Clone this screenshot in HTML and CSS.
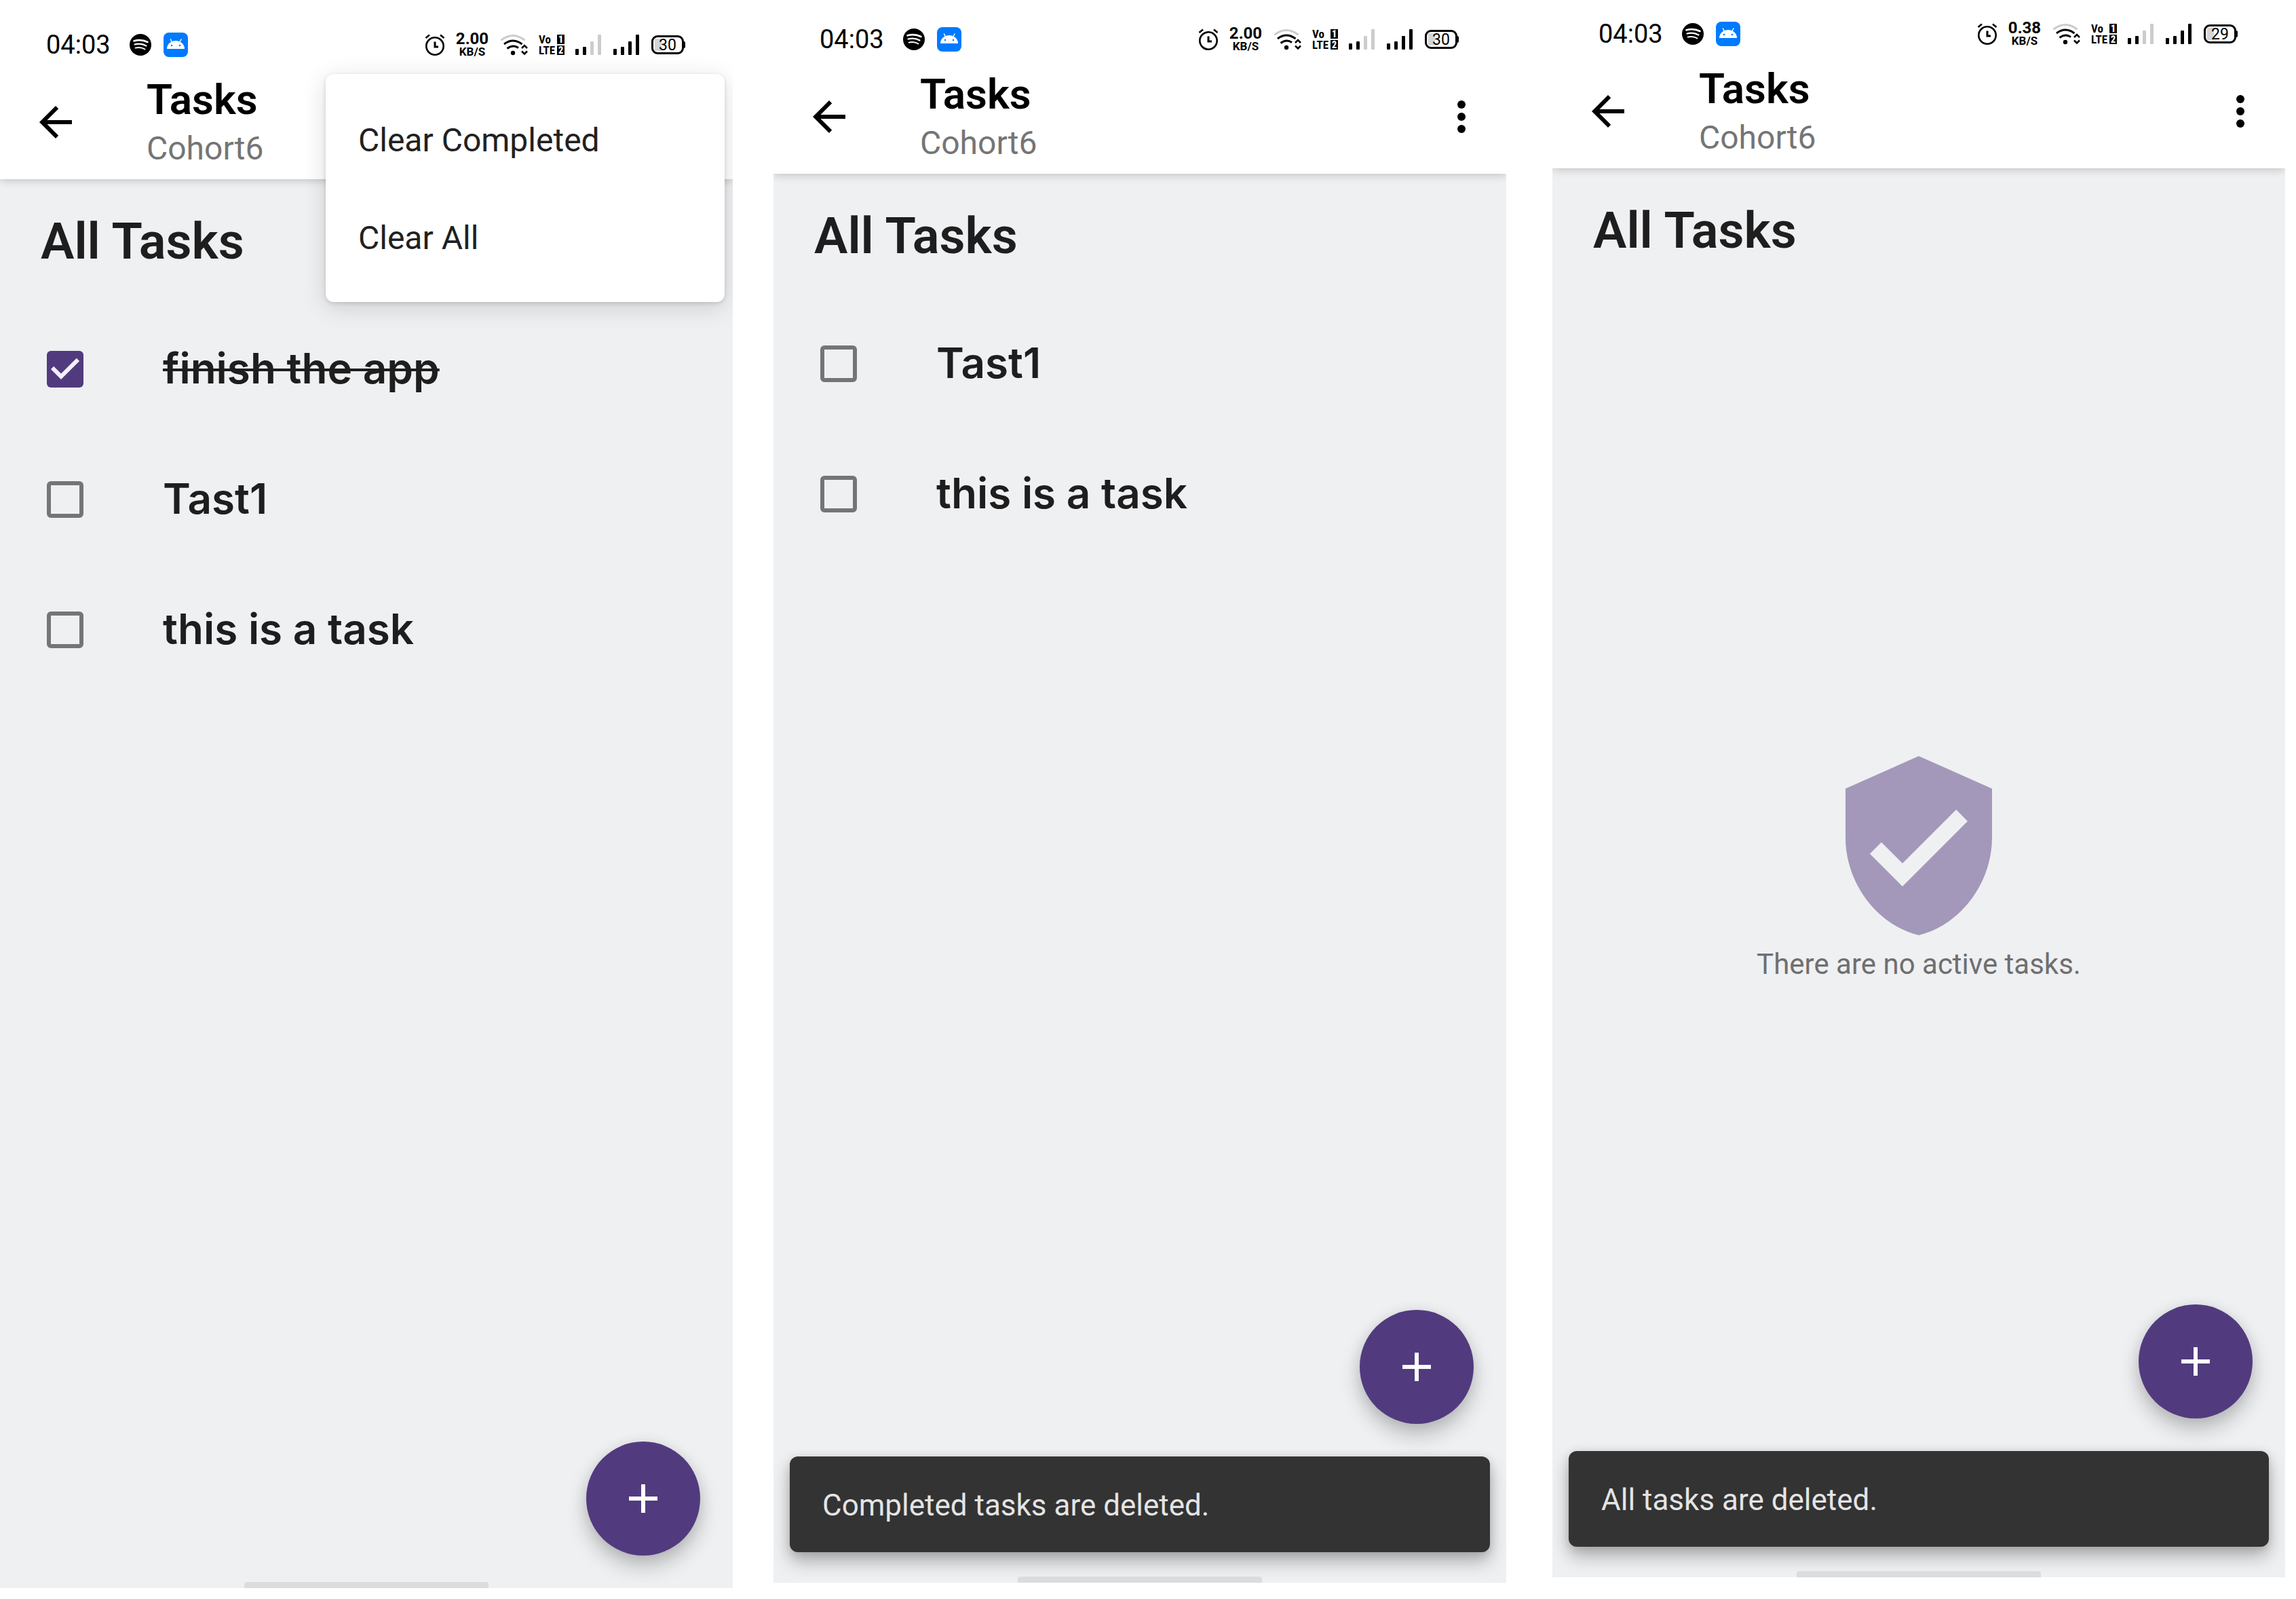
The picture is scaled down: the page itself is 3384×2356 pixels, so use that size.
FILE: index.html
```html
<!DOCTYPE html>
<html lang="en">
<head>
<meta charset="utf-8">
<title>Tasks</title>
<link rel="stylesheet" href="styles.css">
</head>
<body>
<svg class="sprite" aria-hidden="true">
  <symbol id="spotify" viewBox="0 0 32 32">
    <circle cx="16" cy="16" r="16"/>
    <g fill="none" stroke="#fff" stroke-linecap="round">
      <path d="M6.500 10.300C13 8.500 21 9.200 26.500 12" stroke-width="2.600"/>
      <path d="M7.500 15.500C13 14 19.500 14.500 24.500 17.500" stroke-width="2.200"/>
      <path d="M8.500 20.600C13 19.500 18.500 20 22.500 22.500" stroke-width="1.900"/>
    </g>
  </symbol>
  <symbol id="android" viewBox="0 0 36 36">
    <rect width="36" height="36" rx="8" fill="#007aff"/>
    <path d="M12.500 14.500L10.500 10M23.500 14.500L26 10" fill="none" stroke="#fff" stroke-width="1.500" stroke-linecap="round"/>
    <path d="M5 24a13 12 0 0 1 26 0z" fill="#fff"/>
    <circle cx="12" cy="19" r="1.300" fill="#007aff"/><circle cx="24" cy="19" r="1.300" fill="#007aff"/>
  </symbol>
  <symbol id="alarm" viewBox="0 0 30 32">
    <g fill="none" stroke="#000" stroke-width="2.600">
      <circle cx="15" cy="18" r="12.700"/>
      <path d="M15 11.500V19h5" stroke-width="3"/>
      <path d="M1.500 6L7 1.500M28.500 6L23 1.500"/>
    </g>
  </symbol>
  <symbol id="wifi" viewBox="0 0 40 32">
    <g fill="none" stroke="#000" stroke-width="3">
      <path d="M1.500 8.500Q18 -3.500 34.500 8.500" stroke="#ccc" stroke-linecap="round"/>
      <path d="M5 15Q18 5 31.500 15"/>
      <path d="M9.500 21.500Q18 15 26 20.500"/>
      <path d="M31 21l4-4 4 4M31 25.500l4 4 4-4" stroke-width="2.600"/>
    </g>
    <circle cx="18" cy="28" r="3.200"/>
  </symbol>
  <symbol id="signal-weak" viewBox="0 0 39 30">
    <rect y="21" width="5" height="9" rx="1"/><rect x="11" y="18" width="5" height="12" rx="1"/>
    <g fill="#ccc"><rect x="22" y="10" width="5" height="20" rx="1"/><rect x="33" width="5" height="30" rx="1"/></g>
  </symbol>
  <symbol id="signal-full" viewBox="0 0 39 30">
    <rect y="21" width="5" height="9" rx="1"/><rect x="11" y="18" width="5" height="12" rx="1"/>
    <rect x="22" y="10" width="5" height="20" rx="1"/><rect x="33" width="5" height="30" rx="1"/>
  </symbol>
  <symbol id="back" viewBox="0 0 24 24"><path d="M20 11H7.830l5.590-5.590L12 4l-8 8 8 8 1.410-1.410L7.830 13H20v-2z"/></symbol>
  <symbol id="more" viewBox="0 0 24 24"><circle cx="12" cy="6" r="2"/><circle cx="12" cy="12" r="2"/><circle cx="12" cy="18" r="2"/></symbol>
  <symbol id="add" viewBox="0 0 24 24"><path d="M19 13h-6v6h-2v-6H5v-2h6V5h2v6h6v2z"/></symbol>
  <symbol id="shield" viewBox="0 0 24 24"><path d="M12 1L3 5v6c0 5.550 3.840 10.740 9 12 5.160-1.260 9-6.450 9-12V5l-9-4zm-2 16l-4-4 1.410-1.410L10 14.170l6.590-6.590L18 9l-8 8z"/></symbol>
</svg>

<div class="board">
  <section class="phone">
    <div class="status">
      <span class="clock">04:03</span>
      <svg class="app-spotify"><use href="#spotify"/></svg>
      <svg class="app-android"><use href="#android"/></svg>
      <div class="indicators">
        <svg class="alarm"><use href="#alarm"/></svg>
        <div class="speed"><span class="rate">2.00</span><span class="unit">KB/S</span></div>
        <svg class="wifi"><use href="#wifi"/></svg>
        <div class="volte"><span>Vo</span><b>1</b><span>LTE</span><b>2</b></div>
        <svg class="signal"><use href="#signal-weak"/></svg>
        <svg class="signal"><use href="#signal-full"/></svg>
        <div class="battery">30</div>
      </div>
    </div>
    <header class="appbar">
      <button class="icon-button" aria-label="Back"><svg><use href="#back"/></svg></button>
      <div class="titles"><h1>Tasks</h1><p>Cohort6</p></div>
      <button class="icon-button" aria-label="More options"><svg><use href="#more"/></svg></button>
    </header>
    <main class="content">
      <h2>All Tasks</h2>
      <ul class="tasks">
        <li><label><input type="checkbox" checked><span>finish the app</span></label></li>
        <li><label><input type="checkbox"><span>Tast1</span></label></li>
        <li><label><input type="checkbox"><span>this is a task</span></label></li>
      </ul>
    </main>
    <button class="fab" aria-label="Add task"><svg><use href="#add"/></svg></button>
    <div class="home"></div>
    <div class="menu">
      <button>Clear Completed</button>
      <button>Clear All</button>
    </div>
  </section>

  <section class="phone phone-second">
    <div class="status">
      <span class="clock">04:03</span>
      <svg class="app-spotify"><use href="#spotify"/></svg>
      <svg class="app-android"><use href="#android"/></svg>
      <div class="indicators">
        <svg class="alarm"><use href="#alarm"/></svg>
        <div class="speed"><span class="rate">2.00</span><span class="unit">KB/S</span></div>
        <svg class="wifi"><use href="#wifi"/></svg>
        <div class="volte"><span>Vo</span><b>1</b><span>LTE</span><b>2</b></div>
        <svg class="signal"><use href="#signal-weak"/></svg>
        <svg class="signal"><use href="#signal-full"/></svg>
        <div class="battery">30</div>
      </div>
    </div>
    <header class="appbar">
      <button class="icon-button" aria-label="Back"><svg><use href="#back"/></svg></button>
      <div class="titles"><h1>Tasks</h1><p>Cohort6</p></div>
      <button class="icon-button" aria-label="More options"><svg><use href="#more"/></svg></button>
    </header>
    <main class="content">
      <h2>All Tasks</h2>
      <ul class="tasks">
        <li><label><input type="checkbox"><span>Tast1</span></label></li>
        <li><label><input type="checkbox"><span>this is a task</span></label></li>
      </ul>
    </main>
    <button class="fab" aria-label="Add task"><svg><use href="#add"/></svg></button>
    <div class="snackbar" role="status">Completed tasks are deleted.</div>
    <div class="home"></div>
  </section>

  <section class="phone phone-third">
    <div class="status">
      <span class="clock">04:03</span>
      <svg class="app-spotify"><use href="#spotify"/></svg>
      <svg class="app-android"><use href="#android"/></svg>
      <div class="indicators">
        <svg class="alarm"><use href="#alarm"/></svg>
        <div class="speed"><span class="rate">0.38</span><span class="unit">KB/S</span></div>
        <svg class="wifi"><use href="#wifi"/></svg>
        <div class="volte"><span>Vo</span><b>1</b><span>LTE</span><b>2</b></div>
        <svg class="signal"><use href="#signal-weak"/></svg>
        <svg class="signal"><use href="#signal-full"/></svg>
        <div class="battery">29</div>
      </div>
    </div>
    <header class="appbar">
      <button class="icon-button" aria-label="Back"><svg><use href="#back"/></svg></button>
      <div class="titles"><h1>Tasks</h1><p>Cohort6</p></div>
      <button class="icon-button" aria-label="More options"><svg><use href="#more"/></svg></button>
    </header>
    <main class="content">
      <h2>All Tasks</h2>
      <div class="empty">
        <svg><use href="#shield"/></svg>
        <p>There are no active tasks.</p>
      </div>
    </main>
    <button class="fab" aria-label="Add task"><svg><use href="#add"/></svg></button>
    <div class="snackbar" role="status">All tasks are deleted.</div>
    <div class="home"></div>
  </section>
</div>
</body>
</html>
```
FILE: styles.css
```css
* { box-sizing: border-box; }

body {
  margin: 0;
  background: #fff;
  color: #1e1e1f;
  font-family: Roboto, "Liberation Sans", sans-serif;
}

h1, h2, p, ul { margin: 0; padding: 0; }

button {
  border: 0;
  padding: 0;
  background: none;
  color: inherit;
  font: inherit;
  cursor: pointer;
}

svg { display: block; flex: none; }

.sprite { position: absolute; width: 0; height: 0; }

.board {
  display: flex;
  align-items: flex-start;
  padding-right: 16px;
}

.phone {
  position: relative;
  display: flex;
  flex: 1;
  flex-direction: column;
  min-height: calc(100vh - 16px);
  overflow: hidden;
  background: #eff0f2;
}

.phone-second { margin-left: 60px; min-height: calc(100vh - 24px); }
.phone-third { margin-left: 68px; min-height: calc(100vh - 32px); }

/* Status bar */
.status {
  display: flex;
  align-items: center;
  height: 96px;
  padding: 36px 70px 0 68px;
  background: #fff;
  color: #000;
}

.phone-second .status { height: 88px; padding-top: 28px; }
.phone-third .status { height: 80px; padding-top: 20px; }

.clock { font-size: 38px; }

.app-spotify { width: 32px; height: 32px; margin-left: 28px; }
.app-android { width: 36px; height: 36px; margin-left: 18px; }

.indicators {
  display: flex;
  align-items: center;
  gap: 17px;
  margin-left: auto;
}

.alarm { width: 30px; height: 32px; }
.wifi { width: 40px; height: 32px; }
.signal { width: 39px; height: 30px; }

.speed {
  display: flex;
  flex-direction: column;
  align-items: center;
  width: 46px;
  margin-right: 2px;
  font-weight: 700;
}

.rate { font-size: 24px; line-height: 20px; }
.unit { font-size: 17px; line-height: 18px; }

.volte {
  display: grid;
  grid-template-columns: 26px 11px;
  gap: 2px 1px;
  width: 38px;
  margin: 0 -1px;
  font-family: "Roboto Condensed", "Liberation Sans Narrow", Roboto, sans-serif;
  font-size: 17px;
  font-weight: 700;
  line-height: 14px;
}

.volte b {
  background: #000;
  color: #fff;
  font-size: 14px;
  text-align: center;
}

.battery {
  position: relative;
  width: 48px;
  height: 28px;
  margin-right: 2px;
  border: 3px solid #000;
  border-radius: 9px;
  background: linear-gradient(#d5d5d5, #d5d5d5) 2px 2px / 10px 18px no-repeat;
  font-size: 23px;
  line-height: 23px;
  text-align: center;
}

.battery::after {
  content: "";
  position: absolute;
  top: 6px;
  right: -5px;
  width: 3px;
  height: 10px;
  border-radius: 0 2px 2px 0;
  background: #000;
}

/* App bar */
.appbar {
  z-index: 1;
  display: flex;
  align-items: center;
  height: 168px;
  padding: 0 30px 0 46px;
  background: #fff;
  box-shadow: 0 2px 12px rgba(0, 0, 0, .2);
  clip-path: inset(0 0 -32px 0);
  color: #000;
}

.icon-button, .icon-button svg { width: 72px; height: 72px; }

.titles { flex: 1; padding: 6px 0 0 98px; }

.titles h1 {
  font-size: 62px;
  font-weight: 600;
  line-height: 72px;
}

.titles p {
  color: #757575;
  font-size: 48px;
  line-height: 72px;
}

/* Content */
.content { flex: 1; padding-top: 50px; }

.content h2 {
  padding-left: 60px;
  font-size: 74px;
  font-weight: 600;
  line-height: 84px;
}

.tasks { margin-top: 50px; list-style: none; }

.tasks label {
  display: flex;
  align-items: center;
  gap: 117px;
  height: 192px;
  padding-left: 69px;
  font-family: Inter, Roboto, sans-serif;
  font-size: 62px;
  font-weight: 600;
}

.tasks span { padding-bottom: 4px; }

.tasks input {
  flex: none;
  width: 54px;
  height: 54px;
  margin: 0;
  border: 6px solid #757575;
  border-radius: 6px;
  appearance: none;
}

.tasks input:checked {
  border: 0;
  background: #513b7e;
}

.tasks input:checked::before {
  content: "";
  display: block;
  height: 100%;
  background: #f3effa;
  clip-path: polygon(38.9% 77.8%, 11.1% 50%, 18.9% 42.2%, 38.9% 62.1%, 81.1% 19.9%, 88.9% 27.8%);
}

.tasks input:checked + span {
  text-decoration: line-through;
  text-decoration-thickness: 4px;
}

.empty {
  display: flex;
  flex-direction: column;
  align-items: center;
  margin-top: 720px;
  color: #6e6f70;
  font-size: 42px;
  line-height: 62px;
}

.empty svg {
  width: 288px;
  height: 288px;
  fill: #a398ba;
}

/* Floating elements */
.fab {
  display: grid;
  align-self: flex-end;
  place-items: center;
  width: 168px;
  height: 168px;
  margin: 0 48px 39px 0;
  border-radius: 50%;
  background: #513b7e;
  box-shadow: 0 16px 30px rgba(0, 0, 0, .22), 0 2px 20px rgba(0, 0, 0, .08);
}

.fab svg { width: 72px; height: 72px; fill: #fff; }

.snackbar {
  margin: 9px 24px 36px;
  padding: 44px 48px 41px;
  border-radius: 12px;
  background: #333;
  box-shadow: 0 14px 26px rgba(0, 0, 0, .28), 0 2px 14px rgba(0, 0, 0, .12);
  color: #e4e4e4;
  font-size: 44px;
  line-height: 56px;
}

.home {
  align-self: center;
  width: 33.333%;
  height: 9px;
  border-radius: 4px 4px 0 0;
  background: #dbdcdd;
}

.menu {
  position: absolute;
  z-index: 2;
  top: 109px;
  right: 12px;
  display: flex;
  flex-direction: column;
  width: 588px;
  padding: 25px 0 23px;
  border-radius: 12px;
  background: #fff;
  box-shadow: 0 8px 36px rgba(0, 0, 0, .14), 0 2px 6px rgba(0, 0, 0, .14);
  color: #212121;
  font-size: 48px;
}

.menu button {
  height: 144px;
  padding: 0 48px;
  text-align: left;
}
```
